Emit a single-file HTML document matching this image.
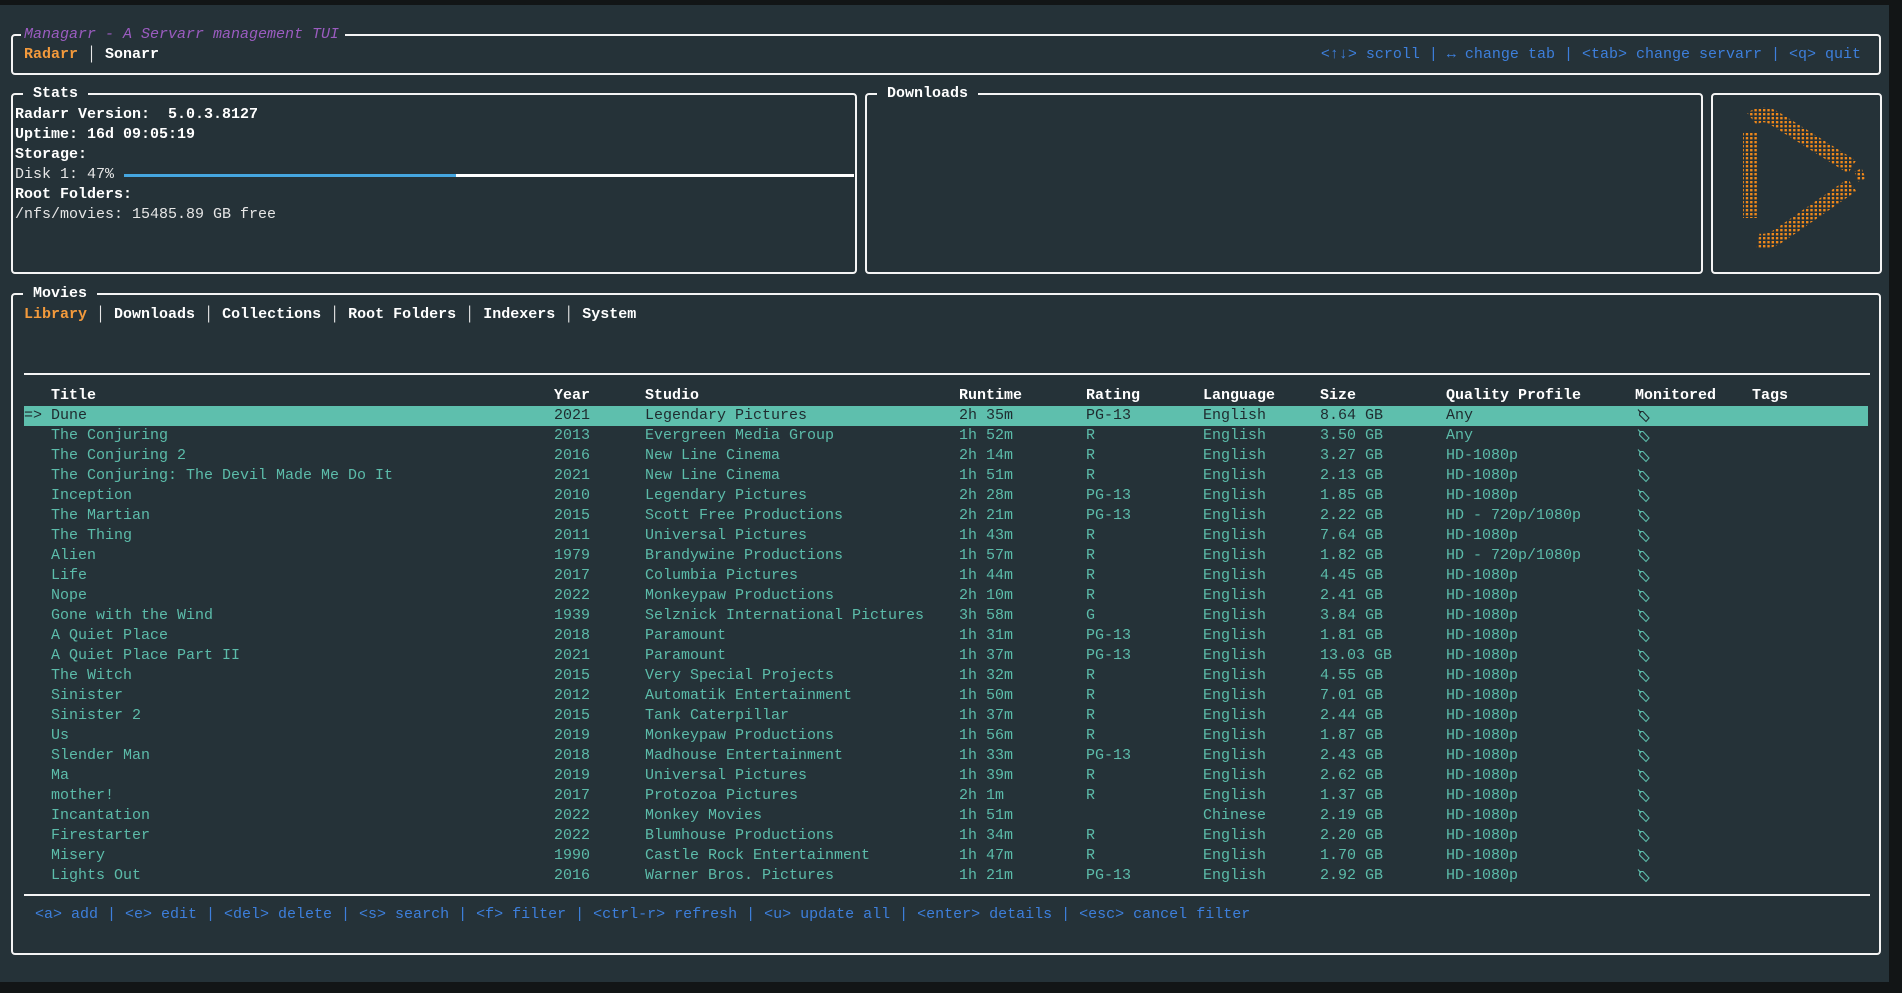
<!DOCTYPE html>
<html><head><meta charset="utf-8"><style>
*{margin:0;padding:0;box-sizing:border-box}
body{width:1902px;height:988px;background:#121516;overflow:hidden;font-family:"Liberation Mono","DejaVu Sans Mono",monospace;font-size:15px;color:#fff;position:relative}
#app{position:absolute;left:0;top:5px;width:1889px;height:977px;background:#253238}
.box{position:absolute;border:2px solid #f4f4f4;border-radius:4px}
.t{position:absolute;white-space:pre;line-height:20px}
.ttl{position:absolute;top:-11px;background:#253238;white-space:pre;line-height:20px;font-weight:bold;padding:0 4px}
.b{font-weight:bold}
.or{color:#f39a3c}
.bl{color:#3d7fdc}
.sep{color:#e8e8e8;font-weight:normal}
.row{position:absolute;left:24px;width:1844px;height:20px;line-height:20px;color:#5cbcaa;white-space:pre}
.row span{position:absolute;top:0}
.hl{background:#5ebfad;color:#1f2b2f}
.hd{color:#fff;font-weight:bold}
.c0{left:0}.c1{left:27px}.c2{left:530px}.c3{left:621px}.c4{left:935px}.c5{left:1062px}.c6{left:1179px}.c7{left:1296px}.c8{left:1422px}.c9{left:1611px}.c10{left:1728px}
.row svg{position:absolute;left:1613px;top:3px}
</style></head><body>
<div id="app">
<div class="box" style="left:11px;top:29px;width:1870px;height:41px">
 <div class="ttl" style="left:8px;color:#9b5cc0;font-style:italic;font-weight:normal;padding:0 6px 0 3px">Managarr - A Servarr management TUI</div>
 <div class="t b" style="left:11px;top:9px"><span class="or">Radarr</span> <span class="sep">│</span> Sonarr</div>
 <div class="t bl" style="right:18px;top:9px">&lt;↑↓&gt; scroll | ↔ change tab | &lt;tab&gt; change servarr | &lt;q&gt; quit</div>
</div>
<div class="box" style="left:11px;top:88px;width:846px;height:181px">
 <div class="ttl" style="left:10px;padding:0 10px">Stats</div>
 <div class="t b" style="left:2px;top:10px">Radarr Version:  5.0.3.8127</div>
 <div class="t b" style="left:2px;top:30px">Uptime: 16d 09:05:19</div>
 <div class="t b" style="left:2px;top:50px">Storage:</div>
 <div class="t" style="left:2px;top:70px;color:#e6e6e6">Disk 1: 47%</div>
 <div style="position:absolute;left:111px;top:79px;width:332px;height:3px;background:#45a6e0"></div>
 <div style="position:absolute;left:443px;top:79px;width:398px;height:3px;background:#fff"></div>
 <div class="t b" style="left:2px;top:90px">Root Folders:</div>
 <div class="t" style="left:2px;top:110px;color:#e6e6e6">/nfs/movies: 15485.89 GB free</div>
</div>
<div class="box" style="left:865px;top:88px;width:838px;height:181px">
 <div class="ttl" style="left:10px;padding:0 10px">Downloads</div>
</div>
<div class="box" style="left:1711px;top:88px;width:171px;height:181px"></div>
<svg style="position:absolute;left:0;top:0" width="1902" height="988">
 <defs><pattern id="p" x="0" y="0" width="4.3" height="4" patternUnits="userSpaceOnUse"><rect width="2.4" height="2.4" fill="#f0881a"/></pattern></defs>
 <g fill="none" stroke="url(#p)">
  <path d="M1750 128 V213" stroke-width="14"/>
  <path d="M1752 114 Q1762 106 1774 113 L1852 162" stroke-width="15"/>
  <path d="M1852 180 L1780 230 Q1768 238 1758 236" stroke-width="15"/>
  <path d="M1858 165 L1862 175" stroke-width="8"/>
 </g>
</svg>
<div class="box" style="left:11px;top:288px;width:1870px;height:662px">
 <div class="ttl" style="left:10px;padding:0 10px">Movies</div>
 <div class="t b" style="left:11px;top:10px"><span class="or">Library</span> <span class="sep">│</span> Downloads <span class="sep">│</span> Collections <span class="sep">│</span> Root Folders <span class="sep">│</span> Indexers <span class="sep">│</span> System</div>
 <div style="position:absolute;left:11px;top:78px;width:1846px;height:2px;background:#f4f4f4"></div>
 <div style="position:absolute;left:11px;top:599px;width:1846px;height:2px;background:#f4f4f4"></div>
 <div class="t bl" style="left:22px;top:610px">&lt;a&gt; add | &lt;e&gt; edit | &lt;del&gt; delete | &lt;s&gt; search | &lt;f&gt; filter | &lt;ctrl-r&gt; refresh | &lt;u&gt; update all | &lt;enter&gt; details | &lt;esc&gt; cancel filter</div>
</div>
<div id="rows"></div>
</div>
<script>
const d=[
["Dune","2021","Legendary Pictures","2h 35m","PG-13","English","8.64 GB","Any"],
["The Conjuring","2013","Evergreen Media Group","1h 52m","R","English","3.50 GB","Any"],
["The Conjuring 2","2016","New Line Cinema","2h 14m","R","English","3.27 GB","HD-1080p"],
["The Conjuring: The Devil Made Me Do It","2021","New Line Cinema","1h 51m","R","English","2.13 GB","HD-1080p"],
["Inception","2010","Legendary Pictures","2h 28m","PG-13","English","1.85 GB","HD-1080p"],
["The Martian","2015","Scott Free Productions","2h 21m","PG-13","English","2.22 GB","HD - 720p/1080p"],
["The Thing","2011","Universal Pictures","1h 43m","R","English","7.64 GB","HD-1080p"],
["Alien","1979","Brandywine Productions","1h 57m","R","English","1.82 GB","HD - 720p/1080p"],
["Life","2017","Columbia Pictures","1h 44m","R","English","4.45 GB","HD-1080p"],
["Nope","2022","Monkeypaw Productions","2h 10m","R","English","2.41 GB","HD-1080p"],
["Gone with the Wind","1939","Selznick International Pictures","3h 58m","G","English","3.84 GB","HD-1080p"],
["A Quiet Place","2018","Paramount","1h 31m","PG-13","English","1.81 GB","HD-1080p"],
["A Quiet Place Part II","2021","Paramount","1h 37m","PG-13","English","13.03 GB","HD-1080p"],
["The Witch","2015","Very Special Projects","1h 32m","R","English","4.55 GB","HD-1080p"],
["Sinister","2012","Automatik Entertainment","1h 50m","R","English","7.01 GB","HD-1080p"],
["Sinister 2","2015","Tank Caterpillar","1h 37m","R","English","2.44 GB","HD-1080p"],
["Us","2019","Monkeypaw Productions","1h 56m","R","English","1.87 GB","HD-1080p"],
["Slender Man","2018","Madhouse Entertainment","1h 33m","PG-13","English","2.43 GB","HD-1080p"],
["Ma","2019","Universal Pictures","1h 39m","R","English","2.62 GB","HD-1080p"],
["mother!","2017","Protozoa Pictures","2h 1m","R","English","1.37 GB","HD-1080p"],
["Incantation","2022","Monkey Movies","1h 51m","","Chinese","2.19 GB","HD-1080p"],
["Firestarter","2022","Blumhouse Productions","1h 34m","R","English","2.20 GB","HD-1080p"],
["Misery","1990","Castle Rock Entertainment","1h 47m","R","English","1.70 GB","HD-1080p"],
["Lights Out","2016","Warner Bros. Pictures","1h 21m","PG-13","English","2.92 GB","HD-1080p"]];
const esc=s=>s.replace(/&/g,"&amp;");
let h='<div class="row hd" style="top:381px"><span class="c1">Title</span><span class="c2">Year</span><span class="c3">Studio</span><span class="c4">Runtime</span><span class="c5">Rating</span><span class="c6">Language</span><span class="c7">Size</span><span class="c8">Quality Profile</span><span class="c9">Monitored</span><span class="c10">Tags</span></div>';
d.forEach((r,i)=>{
 const col=i==0?'#1f2b2f':'#5cbcaa';
 const ic='<svg width="14" height="14" viewBox="0 0 14 14"><path d="M1 0.5 L4 4 M3 2.5 L6 2.5 L12 9 L9 12.5 L2.5 6 Z" fill="none" stroke="'+col+'" stroke-width="1.1"/></svg>';
 h+='<div class="row'+(i==0?' hl':'')+'" style="top:'+(401+i*20)+'px">'+(i==0?'<span class="c0">=&gt;</span>':'')+
 '<span class="c1">'+esc(r[0])+'</span><span class="c2">'+r[1]+'</span><span class="c3">'+r[2]+'</span><span class="c4">'+r[3]+'</span><span class="c5">'+r[4]+'</span><span class="c6">'+r[5]+'</span><span class="c7">'+r[6]+'</span><span class="c8">'+r[7]+'</span>'+ic+'</div>';
});
document.getElementById('rows').innerHTML=h;
</script>
</body></html>
